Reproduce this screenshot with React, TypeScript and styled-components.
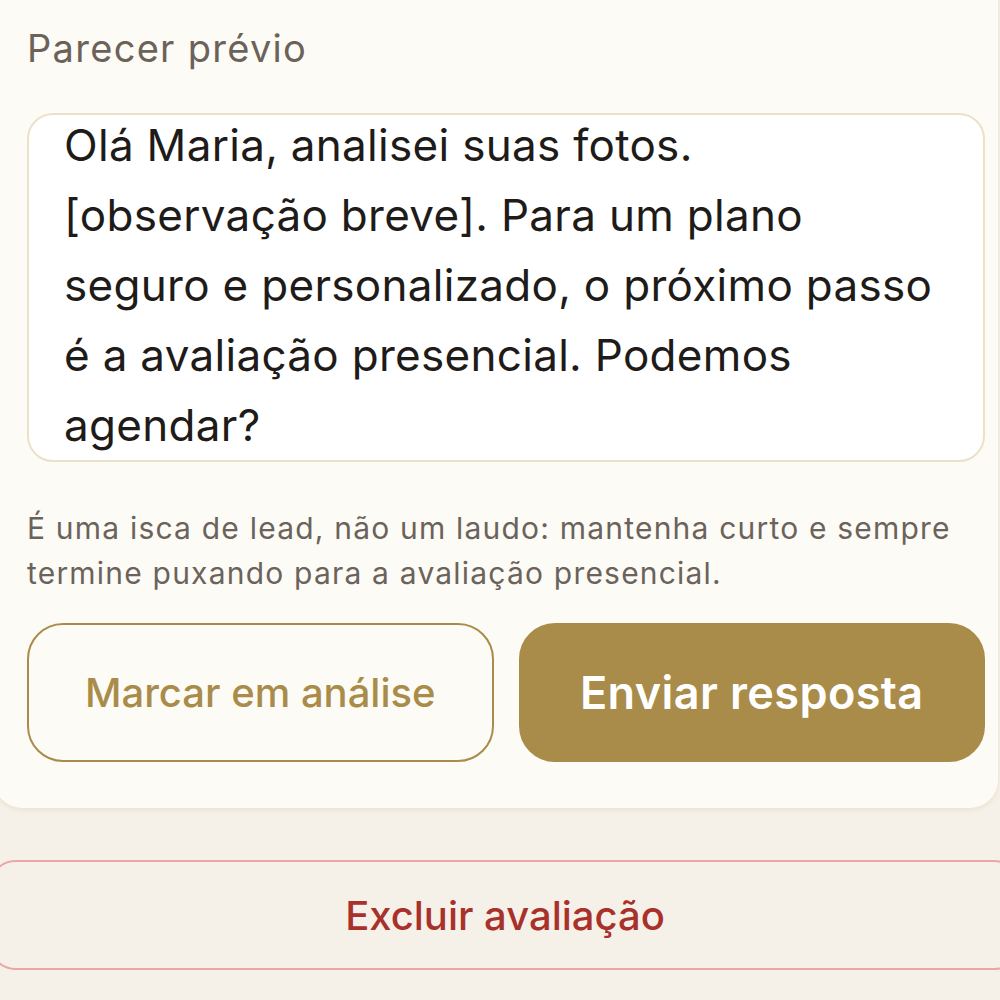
import * as React from 'react';
import styled, { createGlobalStyle } from 'styled-components';

const GlobalStyle = createGlobalStyle`
    html, body {
        margin: 0;
        padding: 0;
        background: #f6f1e8;
        overflow: hidden;
    }
    body {
        font-family: Inter, 'Liberation Sans', sans-serif;
        -webkit-font-smoothing: antialiased;
    }
`;

const Page = styled.div`
    width: 1000px;
    height: 1000px;
    display: flex;
    flex-direction: column;
    overflow: hidden;
`;

const Card = styled.section`
    margin: -40px 0 0 -6px;
    width: 1004px;
    box-sizing: border-box;
    padding: 66px 13px 46px 33px;
    background: #fdfbf5;
    border-radius: 28px;
    box-shadow: 0 2px 5px rgba(140, 115, 60, 0.12);
    display: flex;
    flex-direction: column;
`;

const Heading = styled.h2`
    margin: 0;
    font-size: 38px;
    line-height: 44px;
    font-weight: 400;
    letter-spacing: 1.3px;
    color: #6b6259;
`;

const TextBox = styled.div`
    margin-top: 43px;
    height: 349px;
    box-sizing: border-box;
    border: 2px solid #ebe1c9;
    border-radius: 26px;
    background: #ffffff;
    padding: 0 35px;
    overflow: hidden;
`;

const TextBody = styled.p`
    margin: -5px 0 0 0;
    font-size: 44px;
    line-height: 70px;
    letter-spacing: 0.3px;
    color: #1e1b19;
    white-space: pre-line;
`;

const Hint = styled.p`
    margin: 44px 0 0 0;
    font-size: 30px;
    line-height: 45px;
    letter-spacing: 1.2px;
    color: #6b635b;
`;

const Actions = styled.div`
    margin-top: 27px;
    display: grid;
    grid-template-columns: 1fr 1fr;
    gap: 25px;
`;

const ActionButton = styled.button<{ $primary?: boolean }>`
    height: 139px;
    box-sizing: border-box;
    border-radius: 36px;
    border: 2px solid #a98c4a;
    background: ${(p) => (p.$primary ? '#a98c4a' : 'transparent')};
    color: ${(p) => (p.$primary ? '#ffffff' : '#a98c4a')};
    font-family: inherit;
    font-size: ${(p) => (p.$primary ? '45px' : '40px')};
    font-weight: ${(p) => (p.$primary ? 600 : 500)};
    letter-spacing: ${(p) => (p.$primary ? '0.4px' : '0')};
    cursor: pointer;
`;

const DeleteButton = styled.button`
    margin: 52px 0 0 -12px;
    width: 1034px;
    height: 110px;
    box-sizing: border-box;
    border: 2px solid #eaa7a5;
    border-radius: 28px;
    background: transparent;
    color: #a8312b;
    font-family: inherit;
    font-size: 40px;
    font-weight: 500;
    cursor: pointer;
`;

const draft =
    'Olá Maria, analisei suas fotos.\n[observação breve]. Para um plano\nseguro e personalizado, o próximo passo\né a avaliação presencial. Podemos\nagendar?';

export default function App(): React.ReactElement {
    return (
        <Page>
            <GlobalStyle />
            <Card>
                <Heading>Parecer prévio</Heading>
                <TextBox role="textbox">
                    <TextBody>{draft}</TextBody>
                </TextBox>
                <Hint>
                    É uma isca de lead, não um laudo: mantenha curto e sempre
                    termine puxando para a avaliação presencial.
                </Hint>
                <Actions>
                    <ActionButton>Marcar em análise</ActionButton>
                    <ActionButton $primary>Enviar resposta</ActionButton>
                </Actions>
            </Card>
            <DeleteButton>Excluir avaliação</DeleteButton>
        </Page>
    );
}
